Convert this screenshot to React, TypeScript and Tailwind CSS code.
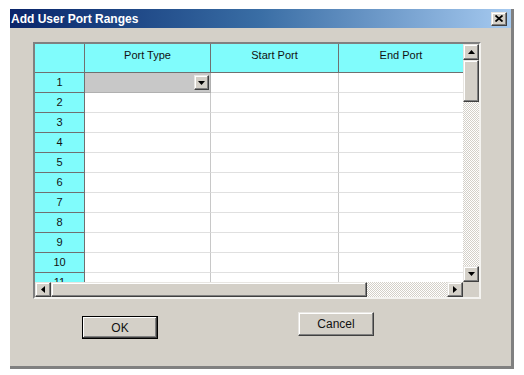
import React from 'react';

const rows = [1, 2, 3, 4, 5, 6, 7, 8, 9, 10];

const Tri = ({ dir }: { dir: 'up' | 'down' | 'left' | 'right' }) => {
    const pts = {
        up: '0,4 7,4 3.5,0',
        down: '0,0 7,0 3.5,4',
        left: '4,0 4,7 0,3.5',
        right: '0,0 0,7 4,3.5',
    }[dir];
    const vert = dir === 'up' || dir === 'down';
    return (
        <svg width={vert ? 7 : 4} height={vert ? 4 : 7} viewBox={vert ? '0 0 7 4' : '0 0 4 7'}>
            <polygon points={pts} fill="#000" />
        </svg>
    );
};

// classic raised 3d box
const raised = 'bg-[#d4d0c8] border border-t-[#e8e6e2] border-l-[#e8e6e2] border-r-[#404040] border-b-[#404040] shadow-[inset_-1px_-1px_0_#808080,inset_1px_1px_0_#fff]';

const ScrollBtn = ({ dir }: { dir: 'up' | 'down' | 'left' | 'right' }) => (
    <div className={`${raised} w-[16px] h-[16px] flex items-center justify-center shrink-0`}>
        <Tri dir={dir} />
    </div>
);

const App: React.FC = () => {
    return (
        <div className="w-[524px] h-[375px] bg-white pt-[9px] pl-[10px] font-['Liberation_Sans',Arial,sans-serif]">
            <div className="w-[504px] h-[360px] bg-[#d4d0c8] flex flex-col border-r-[3px] border-b-[3px] border-r-[#808080] border-b-[#808080]">
                {/* title bar */}
                <div className="h-[19px] flex items-center justify-between pl-[1px] pr-[4px] bg-gradient-to-r from-[#0a246a] via-[#3a6ea5] to-[#a6caf0]">
                    <span className="text-white font-bold text-[12px] font-['Liberation_Sans',Arial,sans-serif]">Add User Port Ranges</span>
                    <div className={`${raised} w-[16px] h-[14px] flex items-center justify-center`}>
                        <svg width="8" height="7" viewBox="0 0 8 7">
                            <path d="M0.5 0.5 L7.5 6.5 M7.5 0.5 L0.5 6.5" stroke="#000" strokeWidth="1.8" />
                        </svg>
                    </div>
                </div>

                {/* body */}
                <div className="flex-1 pl-[23px] pt-[14px]">
                    {/* grid */}
                    <div className="w-[448px] h-[257px] border-2 border-t-[#808080] border-l-[#808080] border-r-[#f4f3f0] border-b-[#f4f3f0] shadow-[inset_1px_1px_0_#404040] flex flex-col text-[11px] text-[#111]">
                        <div className="flex h-[238px]">
                            <div className="w-[428px] overflow-hidden bg-white">
                                {/* header */}
                                <div className="flex h-[29px] bg-[#80fcfc] border-b border-[#707070]">
                                    <div className="w-[50px] border-r border-[#707070]" />
                                    <div className="w-[126px] border-r border-[#707070] text-center pt-[3px]">Port Type</div>
                                    <div className="w-[128px] border-r border-[#707070] text-center pt-[3px]">Start Port</div>
                                    <div className="w-[124px] text-center pt-[3px]">End Port</div>
                                </div>
                                {rows.map((n) => (
                                    <div key={n} className="flex h-[20px]">
                                        <div className="w-[50px] bg-[#80fcfc] border-r border-b border-[#707070] text-center leading-[19px]">{n}</div>
                                        {n === 1 ? (
                                            <div className="w-[126px] bg-[#c8c8c8] border-r border-b border-[#b0b0b0] flex justify-end items-center pr-[1px]">
                                                <div className={`${raised} w-[15px] h-[15px] flex items-center justify-center`}>
                                                    <Tri dir="down" />
                                                </div>
                                            </div>
                                        ) : (
                                            <div className="w-[126px] border-r border-b border-r-[#c8c8c8] border-b-[#e0e0e0]" />
                                        )}
                                        <div className="w-[128px] border-r border-b border-r-[#c8c8c8] border-b-[#e0e0e0]" />
                                        <div className="w-[124px] border-b border-[#e0e0e0]" />
                                    </div>
                                ))}
                                <div className="flex h-[9px] overflow-hidden">
                                    <div className="w-[50px] bg-[#80fcfc] border-r border-[#707070] text-center leading-[19px]">11</div>
                                    <div className="w-[126px] border-r border-[#c8c8c8]" />
                                    <div className="w-[128px] border-r border-[#c8c8c8]" />
                                    <div className="w-[124px]" />
                                </div>
                            </div>
                            {/* vertical scrollbar */}
                            <div className="w-[16px] flex flex-col bg-[repeating-conic-gradient(#d4d0c8_0_25%,#ffffff_0_50%)] bg-[length:2px_2px]">
                                <ScrollBtn dir="up" />
                                <div className={`${raised} h-[42px]`} />
                                <div className="flex-1" />
                                <ScrollBtn dir="down" />
                            </div>
                        </div>
                        <div className="flex h-[15px]">
                            <div className="w-[428px] flex bg-[repeating-conic-gradient(#d4d0c8_0_25%,#ffffff_0_50%)] bg-[length:2px_2px]">
                                <div className={`${raised} w-[16px] h-[15px] flex items-center justify-center`}>
                                    <Tri dir="left" />
                                </div>
                                <div className={`${raised} w-[316px] h-[15px]`} />
                                <div className="flex-1" />
                                <div className={`${raised} w-[16px] h-[15px] flex items-center justify-center`}>
                                    <Tri dir="right" />
                                </div>
                            </div>
                            <div className="w-[16px] bg-[#d4d0c8]" />
                        </div>
                    </div>

                    {/* buttons */}
                    <div className="flex items-start mt-[13px] text-[12px] text-[#111]">
                        <button className="ml-[49px] mt-[4px] w-[76px] h-[23px] bg-[#d4d0c8] border border-[#000] shadow-[inset_-1px_-1px_0_#404040,inset_1px_1px_0_#fff,inset_-2px_-2px_0_#808080]">OK</button>
                        <button className={`${raised} ml-[140px] w-[76px] h-[24px]`}>Cancel</button>
                    </div>
                </div>
            </div>
        </div>
    );
};

export default App;
